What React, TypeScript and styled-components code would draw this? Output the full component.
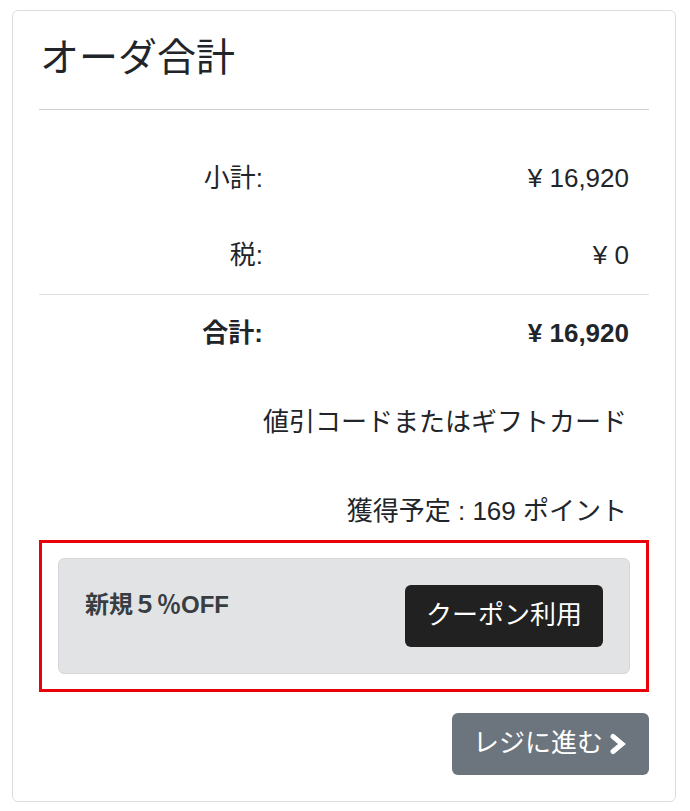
import { Fragment } from 'react';
import styled, { createGlobalStyle } from 'styled-components';

const GlobalStyle = createGlobalStyle`
	html, body {
		margin: 0;
		padding: 0;
		background: #fff;
	}

	body {
		font-family: "Liberation Sans", "Noto Sans CJK JP", sans-serif;
		color: #212529;
	}
`;

const Page = styled.div`
	padding: 10px 14px 10px 12px;
`;

const Card = styled.section`
	border: 1px solid #dcdcdc;
	border-radius: 6px;
	padding: 24px 26px 26px 26px;
	display: flex;
	flex-direction: column;
`;

const Title = styled.h2`
	margin: 0 0 28px;
	font-size: 39px;
	font-weight: 400;
	line-height: 46px;
	padding-left: 1px;
`;

const Rule = styled.hr`
	margin: 0 0 30px;
	border: 0;
	border-top: 1px solid #cfcfcf;
`;

const Totals = styled.div`
	display: grid;
	grid-template-columns: 40% 60%;
`;

const Cell = styled.div<{ $bold?: boolean; $divided?: boolean }>`
	padding: 19px 20px;
	font-size: 26px;
	line-height: 39px;
	text-align: right;
	font-weight: ${(p) => (p.$bold ? 700 : 400)};
	border-top: ${(p) => (p.$divided ? '1px solid #dee2e6' : '0')};
`;

const Note = styled.p<{ $gap: number }>`
	margin: ${(p) => p.$gap}px 0 0;
	padding-right: 22px;
	font-size: 26px;
	line-height: 39px;
	text-align: right;
`;

const Highlight = styled.div`
	margin-top: 9px;
	border: 3px solid #e8000b;
	padding: 15px 16px;
`;

const CouponBox = styled.div`
	background: #e2e3e5;
	border: 1px solid #d6d8db;
	border-radius: 6px;
	padding: 26px;
	display: flex;
	justify-content: space-between;
	align-items: flex-start;
`;

const CouponName = styled.strong`
	color: #383d41;
	font-size: 24px;
	line-height: 33px;
	padding-top: 3px;
`;

const Button = styled.button<{ $tone: 'dark' | 'secondary' }>`
	border: 0;
	border-radius: 6px;
	background: ${(p) => (p.$tone === 'dark' ? '#212121' : '#6c757d')};
	color: #fff;
	font-family: inherit;
	font-size: 26px;
	line-height: 39px;
	padding: 11px 21px 12px;
	display: inline-flex;
	align-items: center;
	gap: 5px;
	cursor: pointer;
`;

const Footer = styled.div`
	margin-top: 21px;
	display: flex;
	justify-content: flex-end;
`;

const Chevron = () => (
	<svg width="20" height="22" viewBox="0 0 20 22" aria-hidden="true">
		<polyline points="5,3.5 14,11 5,18.5" fill="none" stroke="#fff" strokeWidth="5" strokeLinejoin="miter" strokeLinecap="round" />
	</svg>
);

const rows = [
	{ label: '小計:', value: '¥ 16,920' },
	{ label: '税:', value: '¥ 0' },
	{ label: '合計:', value: '¥ 16,920', bold: true, divided: true },
];

const App = () => {
	return (
		<>
			<GlobalStyle />
			<Page>
				<Card>
					<Title>オーダ合計</Title>
					<Rule />
					<Totals>
						{rows.map((row, i) => (
							<Fragment key={i}>
								<Cell $bold={row.bold} $divided={row.divided}>{row.label}</Cell>
								<Cell $bold={row.bold} $divided={row.divided}>{row.value}</Cell>
							</Fragment>
						))}
					</Totals>
					<Note $gap={31}>値引コードまたはギフトカード</Note>
					<Note $gap={50}>獲得予定 : 169 ポイント</Note>
					<Highlight>
						<CouponBox>
							<CouponName>新規５％OFF</CouponName>
							<Button $tone="dark">クーポン利用</Button>
						</CouponBox>
					</Highlight>
					<Footer>
						<Button $tone="secondary">
							レジに進む
							<Chevron />
						</Button>
					</Footer>
				</Card>
			</Page>
		</>
	);
};

export default App;
